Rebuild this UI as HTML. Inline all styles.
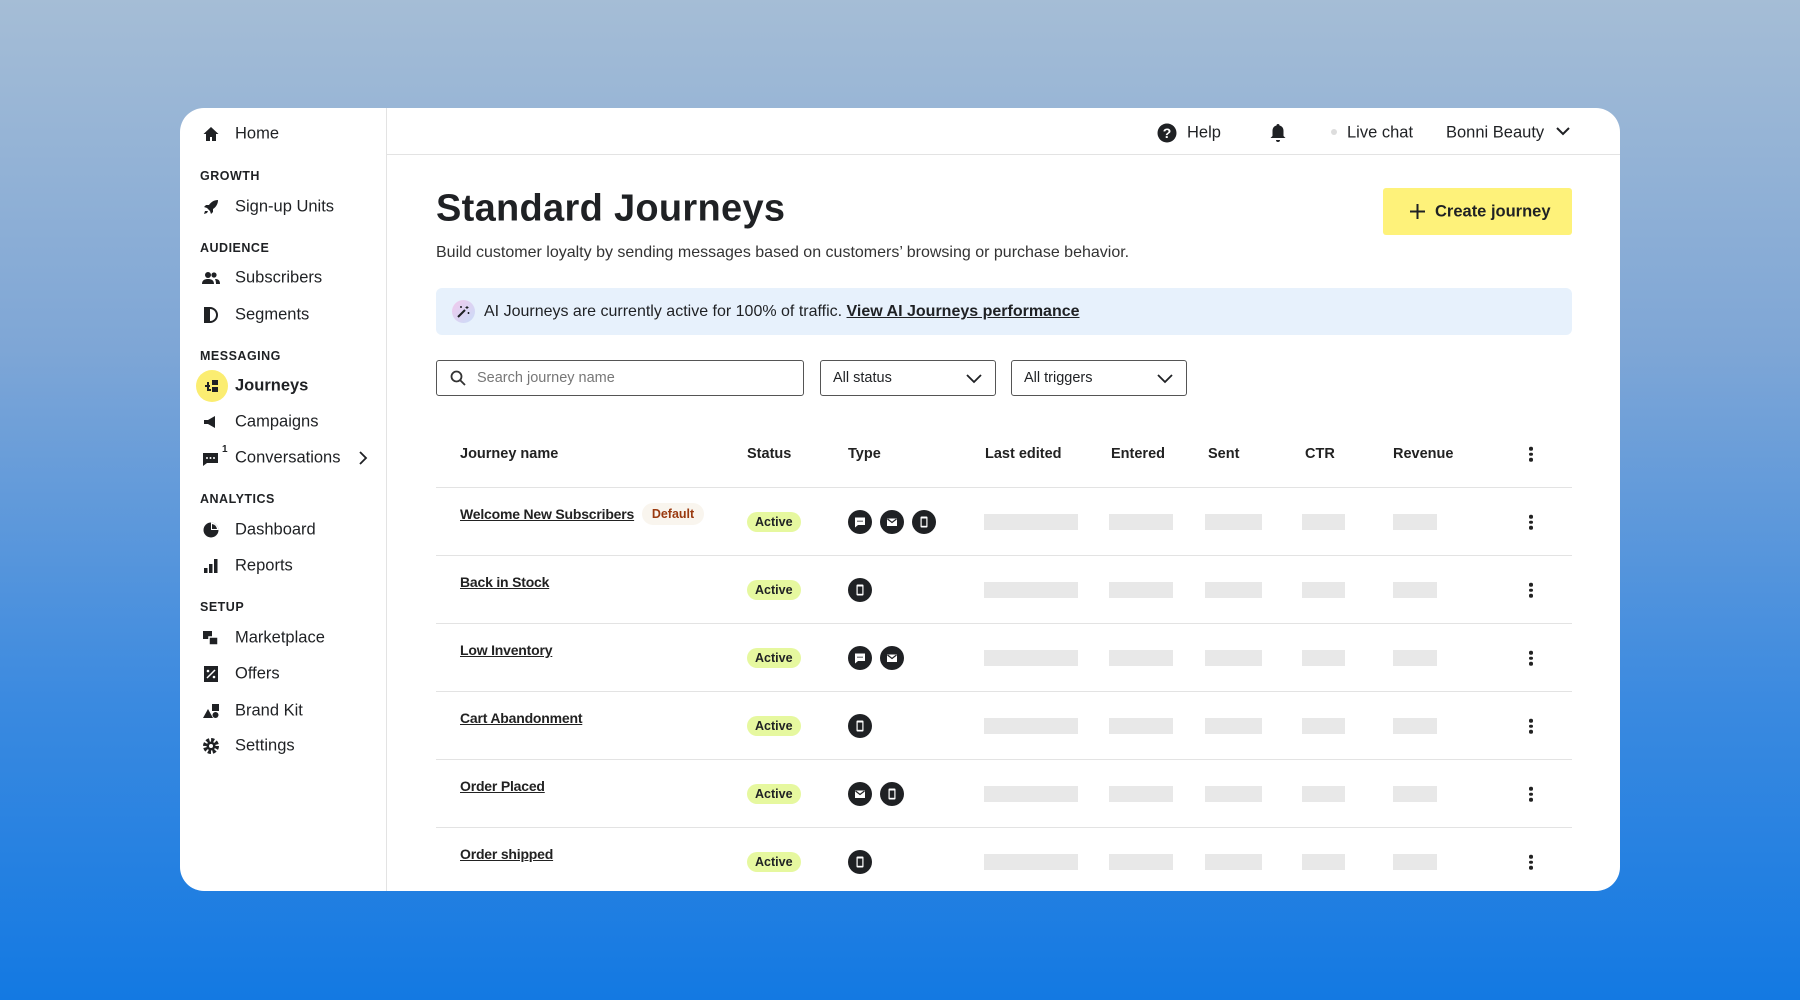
<!DOCTYPE html>
<html><head><meta charset="utf-8"><style>
*{box-sizing:border-box;margin:0;padding:0}
body{width:1800px;height:1000px;overflow:hidden;background:linear-gradient(180deg,#a5bdd6 0%,#7ea6d6 35%,#3b8ae0 70%,#1379e2 100%);font-family:"Liberation Sans",sans-serif;color:#1f2124;position:relative}
.card{position:absolute;left:180px;top:108px;width:1440px;height:783px;background:#fff;border-radius:24px;overflow:hidden}
.side{position:absolute;left:0;top:0;width:207px;height:100%;border-right:1px solid #e3e3e3}
.a{position:absolute}
.nav{position:absolute;left:55px;font-size:16.5px;color:#1f2124;transform:translateY(-50%)}
.ic{position:absolute;left:22px;width:18px;height:18px;transform:translateY(-50%)}
.sec{position:absolute;left:20px;font-size:12.5px;font-weight:bold;letter-spacing:.5px;transform:translateY(-50%)}
.top{position:absolute;left:207px;right:0;top:0;height:47px;border-bottom:1px solid #e3e3e3}
.t{position:absolute;transform:translateY(-50%);white-space:nowrap}
.hd{font-size:14.5px;font-weight:bold;color:#222}
.line{position:absolute;left:256px;width:1136px;height:1px;background:#e3e3e3}
.bar{position:absolute;height:16px;background:#e8e8e8;transform:translateY(-50%)}
.badge{position:absolute;background:#e6f89f;border-radius:10px;font-size:12.5px;font-weight:bold;padding:3px 8px;transform:translateY(-50%)}
.nm{position:absolute;font-size:14px;font-weight:bold;letter-spacing:-.2px;text-decoration:underline;transform:translateY(-50%);color:#222;white-space:nowrap}
.ci{position:absolute;width:24px;height:24px;border-radius:50%;background:#1f2124;transform:translateY(-50%)}
.ci svg{position:absolute;left:6px;top:6px;width:12px;height:12px}
.keb{position:absolute;left:1349px;width:4px;transform:translateY(-50%)}
.keb i{display:block;width:3.5px;height:3.5px;border-radius:50%;background:#222;margin:2px 0}
.sel{position:absolute;top:252px;height:36px;border:1px solid #555;border-radius:3px;font-size:14.5px;padding:0 12px;line-height:34px}
</style></head><body>
<svg width="0" height="0" style="position:absolute">
 <defs>
  <symbol id="chat" viewBox="0 0 12 12"><path d="M1 1.5h10v7.5H4L1 11.5z" fill="#fff"/><circle cx="4" cy="5.2" r=".7" fill="#1f2124"/><circle cx="6" cy="5.2" r=".7" fill="#1f2124"/><circle cx="8" cy="5.2" r=".7" fill="#1f2124"/></symbol>
  <symbol id="mail" viewBox="0 0 12 12"><rect x="1" y="2.5" width="10" height="7.5" fill="#fff"/><path d="M1.5 3l4.5 3.5L10.5 3" stroke="#1f2124" stroke-width="1.2" fill="none"/></symbol>
  <symbol id="phone" viewBox="0 0 12 12"><rect x="2.5" y="0.5" width="7" height="11" rx="1" fill="#fff"/><rect x="3.7" y="2.5" width="4.6" height="7.3" fill="#1f2124"/></symbol>
 </defs>
</svg>
<div class="card">
 <div class="side">
  <svg class="ic" style="top:26px" viewBox="0 0 18 18"><path d="M9 2L1.5 9H4v7h4v-4h2v4h4V9h2.5z" fill="#1f2124"/></svg>
  <div class="nav" style="top:26px">Home</div>
  <div class="sec" style="top:68px">GROWTH</div>
  <svg class="ic" style="top:99px" viewBox="0 0 18 18"><path d="M16 2c-4 0-7 2-9 5L4 7 2 9l3 1 3 3 1 3 2-2v-3c3-2 5-5 5-9zM3 13l-1 3 3-1 1-2z" fill="#1f2124"/></svg>
  <div class="nav" style="top:99px">Sign-up Units</div>
  <div class="sec" style="top:140px">AUDIENCE</div>
  <svg class="ic" style="top:170px" viewBox="0 0 18 18"><circle cx="6" cy="6" r="3" fill="#1f2124"/><circle cx="12" cy="6" r="2.6" fill="#1f2124"/><path d="M0 15c0-4 3-5 6-5s6 1 6 5zM13 10c3 0 5 1 5 5h-4c0-2-.5-4-1-5z" fill="#1f2124"/></svg>
  <div class="nav" style="top:170px">Subscribers</div>
  <svg class="ic" style="top:207px" viewBox="0 0 18 18"><path d="M3 2h5a7 7 0 010 14H3z" fill="none" stroke="#1f2124" stroke-width="2"/><path d="M3 2h5v14H3z" fill="#1f2124"/></svg>
  <div class="nav" style="top:207px">Segments</div>
  <div class="sec" style="top:248px">MESSAGING</div>
  <div class="a" style="left:16px;top:262px;width:32px;height:32px;border-radius:50%;background:#fbed71"></div>
  <svg class="ic" style="top:278px;left:23px" viewBox="0 0 18 18"><path d="M2 9h5M5 5v8h3" stroke="#1f2124" stroke-width="2" fill="none"/><rect x="9" y="3" width="6" height="5" fill="#1f2124"/><rect x="9" y="10" width="6" height="5" fill="#1f2124"/></svg>
  <div class="nav" style="top:278px;font-weight:bold">Journeys</div>
  <svg class="ic" style="top:314px" viewBox="0 0 18 18"><path d="M2 7h4l7-4v12l-7-4H2z" fill="#1f2124"/></svg>
  <div class="nav" style="top:314px">Campaigns</div>
  <svg class="ic" style="top:350px" viewBox="0 0 18 18"><path d="M1 4h15v10H5l-4 3z" fill="#1f2124"/><circle cx="5" cy="9" r="1" fill="#fff"/><circle cx="8.5" cy="9" r="1" fill="#fff"/><circle cx="12" cy="9" r="1" fill="#fff"/></svg>
  <div class="a" style="left:42px;top:336px;font-size:10px;font-weight:bold">1</div>
  <div class="nav" style="top:350px">Conversations</div>
  <svg class="a" style="left:178px;top:343px" width="10" height="14" viewBox="0 0 10 14"><path d="M2 1l6 6-6 6" stroke="#1f2124" stroke-width="1.8" fill="none"/></svg>
  <div class="sec" style="top:391px">ANALYTICS</div>
  <svg class="ic" style="top:422px" viewBox="0 0 18 18"><circle cx="9" cy="9" r="7.5" fill="#1f2124"/><path d="M9 9V1.5A7.5 7.5 0 0116.5 9z" fill="#fff"/><path d="M10 8V3a6 6 0 015 5z" fill="#1f2124"/></svg>
  <div class="nav" style="top:422px">Dashboard</div>
  <svg class="ic" style="top:458px" viewBox="0 0 18 18"><rect x="2" y="11" width="3.5" height="5" fill="#1f2124"/><rect x="7" y="7" width="3.5" height="9" fill="#1f2124"/><rect x="12" y="2" width="3.5" height="14" fill="#1f2124"/></svg>
  <div class="nav" style="top:458px">Reports</div>
  <div class="sec" style="top:499px">SETUP</div>
  <svg class="ic" style="top:530px" viewBox="0 0 18 18"><rect x="1" y="2" width="9" height="8" fill="#1f2124"/><rect x="7" y="8" width="9" height="8" fill="#1f2124" stroke="#fff" stroke-width="1.5"/></svg>
  <div class="nav" style="top:530px">Marketplace</div>
  <svg class="ic" style="top:566px" viewBox="0 0 18 18"><rect x="2" y="1" width="14" height="16" fill="#1f2124"/><path d="M5 13l8-8" stroke="#fff" stroke-width="1.5"/><circle cx="6" cy="6" r="1.3" fill="#fff"/><circle cx="12" cy="12" r="1.3" fill="#fff"/></svg>
  <div class="nav" style="top:566px">Offers</div>
  <svg class="ic" style="top:603px" viewBox="0 0 18 18"><path d="M1 16l5-9 5 9z" fill="#1f2124"/><rect x="10" y="2" width="7" height="7" fill="#1f2124"/><circle cx="13.5" cy="13" r="3" fill="#1f2124"/></svg>
  <div class="nav" style="top:603px">Brand Kit</div>
  <svg class="ic" style="top:638px" viewBox="0 0 18 18"><circle cx="9" cy="9" r="6" fill="none" stroke="#1f2124" stroke-width="4" stroke-dasharray="3 1.7"/><circle cx="9" cy="9" r="4.5" fill="#1f2124"/><circle cx="9" cy="9" r="2" fill="#fff"/></svg>
  <div class="nav" style="top:638px">Settings</div>
 </div>
 <div class="top">
  <svg class="a" style="left:770px;top:15px" width="20" height="20" viewBox="0 0 20 20"><circle cx="10" cy="10" r="9.5" fill="#1f2124"/><text x="10" y="15" font-size="14" font-weight="bold" fill="#fff" text-anchor="middle" font-family="Liberation Sans">?</text></svg>
  <div class="t" style="left:800px;top:25px;font-size:16.5px">Help</div>
  <svg class="a" style="left:882px;top:15px" width="18" height="20" viewBox="0 0 18 20"><path d="M9 1a1.5 1.5 0 011.5 1.5C13 3 14.5 5 14.5 8v5l2 2H1.5l2-2V8C3.5 5 5 3 7.5 2.5A1.5 1.5 0 019 1zM7 17h4a2 2 0 01-4 0z" fill="#1f2124"/></svg>
  <div class="a" style="left:944px;top:21px;width:6px;height:6px;border-radius:50%;background:#ddd"></div>
  <div class="t" style="left:960px;top:25px;font-size:16.5px">Live chat</div>
  <div class="t" style="left:1059px;top:25px;font-size:16.5px">Bonni Beauty</div>
  <svg class="a" style="left:1168px;top:18px" width="16" height="12" viewBox="0 0 16 12"><path d="M2 2l6 6 6-6" stroke="#1f2124" stroke-width="2" fill="none"/></svg>
 </div>
 <div class="t" style="left:256px;top:101px;font-size:38px;font-weight:bold;letter-spacing:.3px">Standard Journeys</div>
 <div class="t" style="left:256px;top:145px;font-size:16px;color:#333">Build customer loyalty by sending messages based on customers’ browsing or purchase behavior.</div>
 <div class="a" style="left:1203px;top:80px;width:189px;height:47px;background:#fef27a;border-radius:3px"></div>
 <svg class="a" style="left:1229px;top:95px" width="17" height="17" viewBox="0 0 17 17"><path d="M8.5 1v15M1 8.5h15" stroke="#1f2124" stroke-width="2"/></svg>
 <div class="t" style="left:1255px;top:104px;font-size:16.5px;font-weight:bold">Create journey</div>
 <div class="a" style="left:256px;top:180px;width:1136px;height:47px;background:#e7f1fc;border-radius:6px"></div>
 <div class="a" style="left:272px;top:192px;width:23px;height:23px;border-radius:50%;background:linear-gradient(135deg,#f1c9ec,#c9dcf8)"></div>
 <svg class="a" style="left:277px;top:197px" width="13" height="13" viewBox="0 0 13 13"><path d="M1 12l7-7" stroke="#1f2124" stroke-width="2"/><path d="M10 1v3M8.5 2.5h3M11.5 7v2M10.5 8h2M4 1v2M3 2h2" stroke="#1f2124" stroke-width="1"/></svg>
 <div class="t" style="left:304px;top:204px;font-size:16px">AI Journeys are currently active for 100% of traffic. <b style="text-decoration:underline">View AI Journeys performance</b></div>
 <div class="sel" style="left:256px;width:368px;color:#777;padding-left:40px">Search journey name</div>
 <svg class="a" style="left:270px;top:262px" width="16" height="16" viewBox="0 0 16 16"><circle cx="6.5" cy="6.5" r="5" stroke="#333" stroke-width="1.8" fill="none"/><path d="M10 10l5 5" stroke="#333" stroke-width="1.8"/></svg>
 <div class="sel" style="left:640px;width:176px">All status</div>
 <svg class="a" style="left:786px;top:266px" width="16" height="10" viewBox="0 0 16 10"><path d="M1 1l7 7 7-7" stroke="#1f2124" stroke-width="1.8" fill="none"/></svg>
 <div class="sel" style="left:831px;width:176px">All triggers</div>
 <svg class="a" style="left:977px;top:266px" width="16" height="10" viewBox="0 0 16 10"><path d="M1 1l7 7 7-7" stroke="#1f2124" stroke-width="1.8" fill="none"/></svg>
 <div class="t hd" style="left:280px;top:346px">Journey name</div>
 <div class="t hd" style="left:567px;top:346px">Status</div>
 <div class="t hd" style="left:668px;top:346px">Type</div>
 <div class="t hd" style="left:805px;top:346px">Last edited</div>
 <div class="t hd" style="left:931px;top:346px">Entered</div>
 <div class="t hd" style="left:1028px;top:346px">Sent</div>
 <div class="t hd" style="left:1125px;top:346px">CTR</div>
 <div class="t hd" style="left:1213px;top:346px">Revenue</div>
 <div class="keb" style="top:346px"><i></i><i></i><i></i></div>
 <div class="line" style="top:379px"></div>
 <div class="line" style="top:447px"></div>
 <div class="line" style="top:515px"></div>
 <div class="line" style="top:583px"></div>
 <div class="line" style="top:651px"></div>
 <div class="line" style="top:719px"></div>

 <div class="nm" style="left:280px;top:406px">Welcome New Subscribers</div>
 <div class="a" style="left:462px;top:395px;width:62px;height:22px;border-radius:11px;background:#f9f5ee;color:#9a3a10;font-size:12.5px;font-weight:bold;text-align:center;line-height:22px">Default</div>
 <div class="badge" style="left:567px;top:414px">Active</div>
 <div class="ci" style="left:668px;top:414px"><svg><use href="#chat"/></svg></div><div class="ci" style="left:700px;top:414px"><svg><use href="#mail"/></svg></div><div class="ci" style="left:732px;top:414px"><svg><use href="#phone"/></svg></div>
 <div class="nm" style="left:280px;top:474px">Back in Stock</div>
 <div class="badge" style="left:567px;top:482px">Active</div>
 <div class="ci" style="left:668px;top:482px"><svg><use href="#phone"/></svg></div>
 <div class="nm" style="left:280px;top:542px">Low Inventory</div>
 <div class="badge" style="left:567px;top:550px">Active</div>
 <div class="ci" style="left:668px;top:550px"><svg><use href="#chat"/></svg></div><div class="ci" style="left:700px;top:550px"><svg><use href="#mail"/></svg></div>
 <div class="nm" style="left:280px;top:610px">Cart Abandonment</div>
 <div class="badge" style="left:567px;top:618px">Active</div>
 <div class="ci" style="left:668px;top:618px"><svg><use href="#phone"/></svg></div>
 <div class="nm" style="left:280px;top:678px">Order Placed</div>
 <div class="badge" style="left:567px;top:686px">Active</div>
 <div class="ci" style="left:668px;top:686px"><svg><use href="#mail"/></svg></div><div class="ci" style="left:700px;top:686px"><svg><use href="#phone"/></svg></div>
 <div class="nm" style="left:280px;top:746px">Order shipped</div>
 <div class="badge" style="left:567px;top:754px">Active</div>
 <div class="ci" style="left:668px;top:754px"><svg><use href="#phone"/></svg></div>

 <div class="bar" style="left:804px;width:94px;top:414px"></div><div class="bar" style="left:929px;width:64px;top:414px"></div><div class="bar" style="left:1025px;width:57px;top:414px"></div><div class="bar" style="left:1122px;width:43px;top:414px"></div><div class="bar" style="left:1213px;width:44px;top:414px"></div><div class="keb" style="top:414px"><i></i><i></i><i></i></div>
 <div class="bar" style="left:804px;width:94px;top:482px"></div><div class="bar" style="left:929px;width:64px;top:482px"></div><div class="bar" style="left:1025px;width:57px;top:482px"></div><div class="bar" style="left:1122px;width:43px;top:482px"></div><div class="bar" style="left:1213px;width:44px;top:482px"></div><div class="keb" style="top:482px"><i></i><i></i><i></i></div>
 <div class="bar" style="left:804px;width:94px;top:550px"></div><div class="bar" style="left:929px;width:64px;top:550px"></div><div class="bar" style="left:1025px;width:57px;top:550px"></div><div class="bar" style="left:1122px;width:43px;top:550px"></div><div class="bar" style="left:1213px;width:44px;top:550px"></div><div class="keb" style="top:550px"><i></i><i></i><i></i></div>
 <div class="bar" style="left:804px;width:94px;top:618px"></div><div class="bar" style="left:929px;width:64px;top:618px"></div><div class="bar" style="left:1025px;width:57px;top:618px"></div><div class="bar" style="left:1122px;width:43px;top:618px"></div><div class="bar" style="left:1213px;width:44px;top:618px"></div><div class="keb" style="top:618px"><i></i><i></i><i></i></div>
 <div class="bar" style="left:804px;width:94px;top:686px"></div><div class="bar" style="left:929px;width:64px;top:686px"></div><div class="bar" style="left:1025px;width:57px;top:686px"></div><div class="bar" style="left:1122px;width:43px;top:686px"></div><div class="bar" style="left:1213px;width:44px;top:686px"></div><div class="keb" style="top:686px"><i></i><i></i><i></i></div>
 <div class="bar" style="left:804px;width:94px;top:754px"></div><div class="bar" style="left:929px;width:64px;top:754px"></div><div class="bar" style="left:1025px;width:57px;top:754px"></div><div class="bar" style="left:1122px;width:43px;top:754px"></div><div class="bar" style="left:1213px;width:44px;top:754px"></div><div class="keb" style="top:754px"><i></i><i></i><i></i></div>
</div>
</body></html>
